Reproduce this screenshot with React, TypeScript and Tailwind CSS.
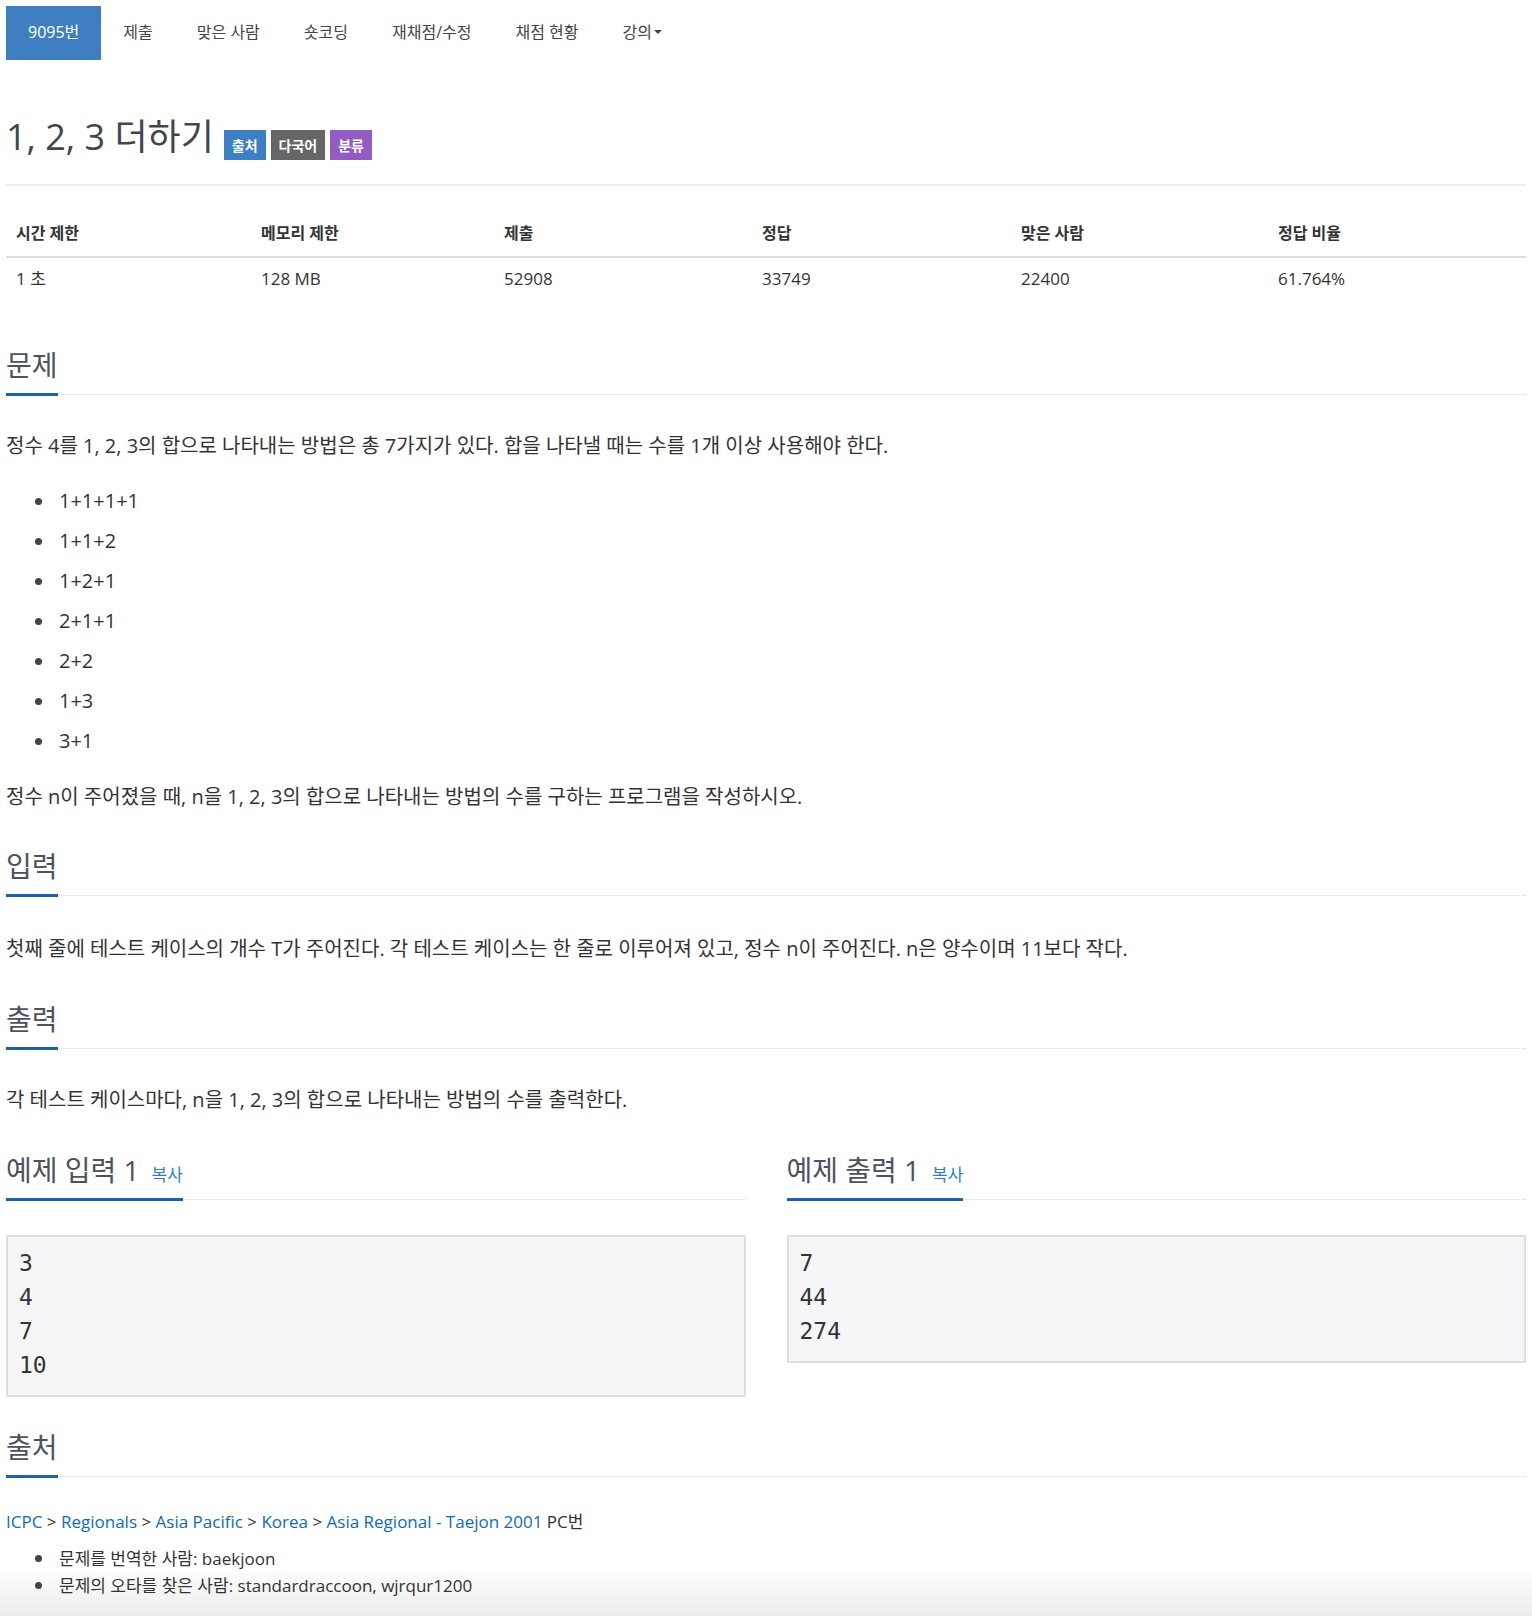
import React from "react";

const sans = "font-['Open_Sans','Noto_Sans_CJK_KR',sans-serif]";

const navItems = ["제출", "맞은 사람", "숏코딩", "재채점/수정", "채점 현황"];

const stats = [
  { label: "시간 제한", value: "1 초" },
  { label: "메모리 제한", value: "128 MB" },
  { label: "제출", value: "52908" },
  { label: "정답", value: "33749" },
  { label: "맞은 사람", value: "22400" },
  { label: "정답 비율", value: "61.764%" },
];

const ways = ["1+1+1+1", "1+1+2", "1+2+1", "2+1+1", "2+2", "1+3", "3+1"];

function Headline({ children, copy }: { children: React.ReactNode; copy?: boolean }) {
  return (
    <div className="border-b border-dotted border-[#d5d9de]">
      <h2 className="inline-block mb-[-2px] border-b-[3px] border-[#1a62ad] pb-[9px] text-[28px] leading-[38px] text-[#4b5360] font-normal">
        {children}
        {copy && <span className="ml-[12px] text-[17px] leading-none text-[#2d7fc8]">복사</span>}
      </h2>
    </div>
  );
}

function Sample({ title, lines }: { title: string; lines: string[] }) {
  return (
    <div>
      <Headline copy>{title}</Headline>
      <pre className="mt-[35px] border-2 border-[#dfdfe3] bg-[#f5f5f7] px-[11px] pt-[9px] pb-[13px] font-['DejaVu_Sans_Mono',monospace] text-[23px] leading-[34px] text-[#333]">
        {lines.join("\n")}
      </pre>
    </div>
  );
}

function Bullet({ children, className = "" }: { children: React.ReactNode; className?: string }) {
  return (
    <li className={`flex items-center ${className}`}>
      <span className="ml-[29px] mr-[17px] h-[7px] w-[7px] shrink-0 rounded-full bg-[#444]" />
      <span>{children}</span>
    </li>
  );
}

export default function App() {
  return (
    <div
      className={`${sans} min-h-[1616px] bg-[linear-gradient(to_bottom,#ffffff_1565px,#ececec_1616px)] px-[6px] pt-[6px] text-[#333]`}
    >
      {/* top tabs */}
      <nav className="flex h-[54px] items-stretch text-[16px]">
        <span className="flex items-center bg-[#3f7fc1] px-[22px] pb-[3px] text-white">9095번</span>
        {navItems.map((item) => (
          <span key={item} className="flex items-center px-[22px] pb-[3px] text-[#444]">
            {item}
          </span>
        ))}
        <span className="flex items-center px-[22px] pb-[3px] text-[#444]">
          강의
          <span className="ml-[2px] mt-[1px] h-0 w-0 border-x-[4px] border-t-[4px] border-x-transparent border-t-[#444]" />
        </span>
      </nav>

      {/* title */}
      <div className="mt-[57px] flex items-start">
        <h1 className="text-[36px] leading-[40px] text-[#3f4651]">1, 2, 3 더하기</h1>
        <div className="ml-[10px] mt-[13px] flex gap-[5px] text-[14px] font-semibold text-white">
          <span className="flex h-[30px] items-center bg-[#3c7fc4] px-[8px]">출처</span>
          <span className="flex h-[30px] items-center bg-[#666] px-[8px]">다국어</span>
          <span className="flex h-[30px] items-center bg-[#935cc2] px-[8px]">분류</span>
        </div>
      </div>
      <div className="mt-[24px] h-[2px] bg-[#eee]" />

      {/* limits table */}
      <div className="mt-[28px] grid grid-cols-[245px_243px_258px_259px_257px_1fr]">
        {stats.map((s) => (
          <div key={s.label} className="border-b-2 border-[#ddd] px-[10px] pt-[8px] pb-[12px] text-[16px] font-bold leading-[22px] text-[#333]">
            {s.label}
          </div>
        ))}
        {stats.map((s) => (
          <div key={s.value} className="px-[10px] pt-[10px] pb-[8px] text-[17px] leading-[22px]">
            {s.value}
          </div>
        ))}
      </div>

      {/* problem */}
      <section className="mt-[48px]">
        <Headline>문제</Headline>
        <div className="mt-[36px] text-[20px] leading-[30px]">
          <p>정수 4를 1, 2, 3의 합으로 나타내는 방법은 총 7가지가 있다. 합을 나타낼 때는 수를 1개 이상 사용해야 한다.</p>
          <ul className="mt-[25px]">
            {ways.map((w) => (
              <Bullet key={w} className="mb-[10px] leading-[30px]">
                {w}
              </Bullet>
            ))}
          </ul>
          <p className="mt-[26px]">정수 n이 주어졌을 때, n을 1, 2, 3의 합으로 나타내는 방법의 수를 구하는 프로그램을 작성하시오.</p>
        </div>
      </section>

      <section className="mt-[35px]">
        <Headline>입력</Headline>
        <p className="mt-[38px] text-[20px] leading-[30px]">
          첫째 줄에 테스트 케이스의 개수 T가 주어진다. 각 테스트 케이스는 한 줄로 이루어져 있고, 정수 n이 주어진다. n은 양수이며 11보다 작다.
        </p>
      </section>

      <section className="mt-[36px]">
        <Headline>출력</Headline>
        <p className="mt-[36px] text-[20px] leading-[30px]">각 테스트 케이스마다, n을 1, 2, 3의 합으로 나타내는 방법의 수를 출력한다.</p>
      </section>

      {/* samples */}
      <div className="mt-[36px] grid grid-cols-2 items-start gap-[41px]">
        <Sample title="예제 입력 1" lines={["3", "4", "7", "10"]} />
        <Sample title="예제 출력 1" lines={["7", "44", "274"]} />
      </div>

      <section className="mt-[31px]">
        <Headline>출처</Headline>
        <p className="mt-[33px] text-[17px] leading-[24px]">
          <a className="text-[#0b6bbf]">ICPC</a> &gt; <a className="text-[#0b6bbf]">Regionals</a> &gt;{" "}
          <a className="text-[#0b6bbf]">Asia Pacific</a> &gt; <a className="text-[#0b6bbf]">Korea</a> &gt;{" "}
          <a className="text-[#0b6bbf]">Asia Regional - Taejon 2001</a> PC번
        </p>
        <ul className="mt-[11px] text-[17px] leading-[27px]">
          <Bullet>문제를 번역한 사람: baekjoon</Bullet>
          <Bullet>문제의 오타를 찾은 사람: standardraccoon, wjrqur1200</Bullet>
        </ul>
      </section>
    </div>
  );
}
